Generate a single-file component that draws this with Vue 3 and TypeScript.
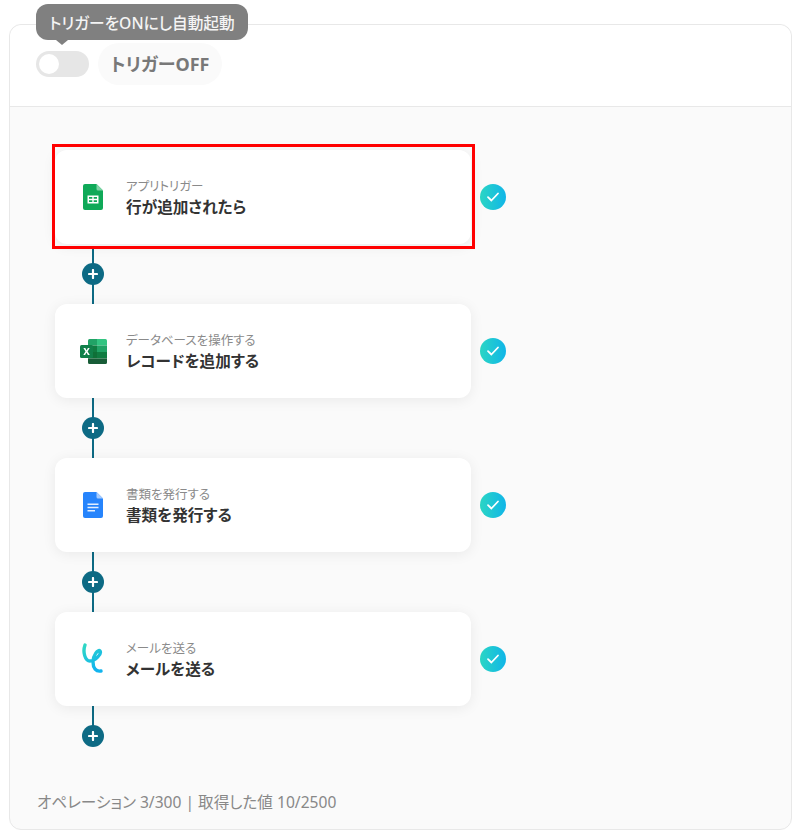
<script setup lang="ts">
interface Step { id: string; kicker: string; title: string; active?: boolean }
const steps: Step[] = [
  { id: 'sheets', kicker: 'アプリトリガー', title: '行が追加されたら', active: true },
  { id: 'excel', kicker: 'データベースを操作する', title: 'レコードを追加する' },
  { id: 'docs', kicker: '書類を発行する', title: '書類を発行する' },
  { id: 'mail', kicker: 'メールを送る', title: 'メールを送る' },
]
</script>

<template>
  <div class="page">
    <section class="panel">
      <header class="head">
        <div class="toggle"><span class="knob"></span></div>
        <div class="state">トリガーOFF</div>
        <div class="tip">トリガーをONにし自動起動</div>
      </header>
      <div class="flow">
        <div v-for="s in steps" :key="s.id" class="step">
          <div class="row">
            <div class="card" :class="{ active: s.active }">
              <div class="icon">
                <svg v-if="s.id === 'sheets'" width="20" height="26" viewBox="0 0 20 26">
                  <path d="M2 0h11.500l6.500 6.500V24a2 2 0 0 1-2 2H2a2 2 0 0 1-2-2V2a2 2 0 0 1 2-2z" fill="#0fa958" />
                  <path d="M13.500 0l6.500 6.500h-5a1.500 1.500 0 0 1-1.500-1.500z" fill="#7fd4a6" />
                  <path d="M4.500 11.500h11v8h-11z M6 13v1.800h3.300V13z M10.700 13v1.800H14V13z M6 16.200V18h3.300v-1.800z M10.700 16.200V18H14v-1.800z" fill="#fff" fill-rule="evenodd" />
                </svg>
                <svg v-else-if="s.id === 'excel'" width="27" height="25" viewBox="0 0 27 25">
                  <path d="M8 1.500a1.500 1.500 0 0 1 1.500-1.500H17v6.500H8z" fill="#21a366" />
                  <path d="M17 0h8.500A1.500 1.500 0 0 1 27 1.500v5H17z" fill="#33c481" />
                  <path d="M8 6.500h9v6.500H8z" fill="#107c41" />
                  <path d="M17 6.500h10V13H17z" fill="#21a366" />
                  <path d="M8 13h9v6.500H8z" fill="#0f7038" />
                  <path d="M17 13h10v6.500H17z" fill="#107c41" />
                  <path d="M8 19.500h19v4A1.500 1.500 0 0 1 25.500 25h-16A1.500 1.500 0 0 1 8 23.500z" fill="#185c37" />
                  <rect x="0" y="6" width="13" height="13" rx="1.500" fill="#11804a" />
                  <path d="M3.400 9h1.900l1.300 2.400L7.900 9h1.800l-2.100 3.400L9.800 16H7.900l-1.400-2.500L5.100 16H3.300l2.200-3.600z" fill="#fff" />
                </svg>
                <svg v-else-if="s.id === 'docs'" width="20" height="26" viewBox="0 0 20 26">
                  <path d="M2 0h11.500l6.500 6.500V24a2 2 0 0 1-2 2H2a2 2 0 0 1-2-2V2a2 2 0 0 1 2-2z" fill="#2684fc" />
                  <path d="M13.500 0l6.500 6.500h-5a1.500 1.500 0 0 1-1.500-1.500z" fill="#a6cbfd" />
                  <path d="M4.500 11.500h11v1.500h-11z M4.500 14.800h11v1.500h-11z M4.500 18.100h7.500v1.500h-7.500z" fill="#e3efff" />
                </svg>
                <svg v-else width="26" height="32" viewBox="0 0 26 32" fill="none">
                  <defs>
                    <linearGradient id="mailgrad" x1="0" y1="0" x2="0.5" y2="1">
                      <stop offset="0" stop-color="#2fd8c4" />
                      <stop offset="1" stop-color="#12b4ee" />
                    </linearGradient>
                  </defs>
                  <path d="M5 2C2.500 9 5 18 10 18C15 18 22 11 20 8C18 6 13 12 13 19C13 25 16 29 21 28" stroke="url(#mailgrad)" stroke-width="3.400" stroke-linecap="round" />
                </svg>
              </div>
              <div class="copy">
                <div class="kicker">{{ s.kicker }}</div>
                <div class="title">{{ s.title }}</div>
              </div>
            </div>
            <div class="check">
              <svg width="14" height="12" viewBox="0 0 14 12" fill="none">
                <path d="M2 6.200l3.400 3.300L12 2.500" stroke="#fff" stroke-width="1.800" stroke-linecap="round" stroke-linejoin="round" />
              </svg>
            </div>
          </div>
          <div class="link">
            <span class="plus">
              <svg width="10" height="10" viewBox="0 0 10 10"><path d="M5 1v8M1 5h8" stroke="#fff" stroke-width="2.200" stroke-linecap="round" /></svg>
            </span>
          </div>
        </div>
      </div>
      <footer class="foot">オペレーション 3/300 | 取得した値 10/2500</footer>
    </section>
  </div>
</template>

<style>
html, body { margin: 0; background: #fff; }
</style>

<style scoped>
.page {
  width: 801px;
  height: 838px;
  padding: 24px 9px 8px;
  box-sizing: border-box;
  font-family: "Noto Sans", "Noto Sans CJK JP", sans-serif;
  font-feature-settings: "palt";
}
.panel {
  width: 783px;
  height: 806px;
  box-sizing: border-box;
  border: 1px solid #e8e8e8;
  border-radius: 12px;
  background: #fafafa;
  display: flex;
  flex-direction: column;
}
.head {
  position: relative;
  height: 82px;
  flex: none;
  box-sizing: border-box;
  padding: 18px 0 0 26px;
  display: flex;
  align-items: flex-start;
  gap: 9px;
  background: #fff;
  border-bottom: 1px solid #e8e8e8;
  border-radius: 12px 12px 0 0;
}
.toggle {
  width: 53px;
  height: 26px;
  margin-top: 8px;
  border-radius: 13px;
  background: #e6e6e6;
  display: flex;
  align-items: center;
  padding-left: 3px;
  box-sizing: border-box;
}
.knob {
  width: 20px;
  height: 20px;
  border-radius: 50%;
  background: #fff;
}
.state {
  width: 124px;
  height: 42px;
  padding-bottom: 2px;
  box-sizing: border-box;
  border-radius: 21px;
  background: #fafafa;
  display: flex;
  align-items: center;
  justify-content: center;
  font-size: 18px;
  font-weight: 700;
  color: #787878;
}
.tip {
  position: absolute;
  left: 26px;
  top: -21px;
  width: 212px;
  height: 36px;
  border-radius: 12px;
  background: #808080;
  color: #f4f4f4;
  font-size: 15.700px;
  font-weight: 500;
  display: flex;
  align-items: center;
  justify-content: center;
}
.tip::after {
  content: "";
  position: absolute;
  left: 20px;
  bottom: -5px;
  border-left: 6px solid transparent;
  border-right: 6px solid transparent;
  border-top: 5px solid #808080;
}
.flow {
  flex: 1;
  padding: 43px 0 0 45px;
  display: flex;
  flex-direction: column;
}
.step { display: flex; flex-direction: column; }
.row {
  position: relative;
  z-index: 1;
  display: flex;
  align-items: center;
  gap: 9px;
}
.card {
  position: relative;
  width: 416px;
  height: 94px;
  box-sizing: border-box;
  padding-left: 19px;
  border-radius: 12px;
  background: #fff;
  box-shadow: 0 2px 14px rgba(0, 0, 0, 0.07);
  display: flex;
  align-items: center;
  gap: 14px;
}
.card.active::after {
  content: "";
  position: absolute;
  left: -3px;
  top: -6px;
  width: 423px;
  height: 105px;
  box-sizing: border-box;
  border: 3px solid #f00;
}
.icon {
  width: 38px;
  height: 38px;
  flex: none;
  display: flex;
  align-items: center;
  justify-content: center;
}
.copy { display: flex; flex-direction: column; padding-top: 2px; }
.kicker {
  font-size: 12.500px;
  line-height: 18px;
  color: #8a8a8a;
}
.title {
  font-size: 15.600px;
  line-height: 22px;
  font-weight: 700;
  color: #333;
}
.check {
  width: 26px;
  height: 26px;
  border-radius: 50%;
  background: linear-gradient(90deg, #2bd6c4, #10b5e8);
  display: flex;
  align-items: center;
  justify-content: center;
}
.link {
  position: relative;
  width: 2px;
  height: 60px;
  margin-left: 37px;
  background: #0d6a84;
  display: flex;
  align-items: center;
  justify-content: center;
}
.step:first-child .link {
  height: 55px;
  margin-top: 5px;
}
.step:first-child .plus { top: -2.500px; }
.step:last-child .link {
  height: 30px;
}
.plus {
  position: relative;
  flex: none;
  width: 22px;
  height: 22px;
  border-radius: 50%;
  background: #0d6a84;
  display: flex;
  align-items: center;
  justify-content: center;
}
.step:last-child .plus { top: 15px; }
.foot {
  height: 37px;
  flex: none;
  padding-left: 27px;
  font-size: 15.600px;
  line-height: 20px;
  color: #888;
}
</style>
